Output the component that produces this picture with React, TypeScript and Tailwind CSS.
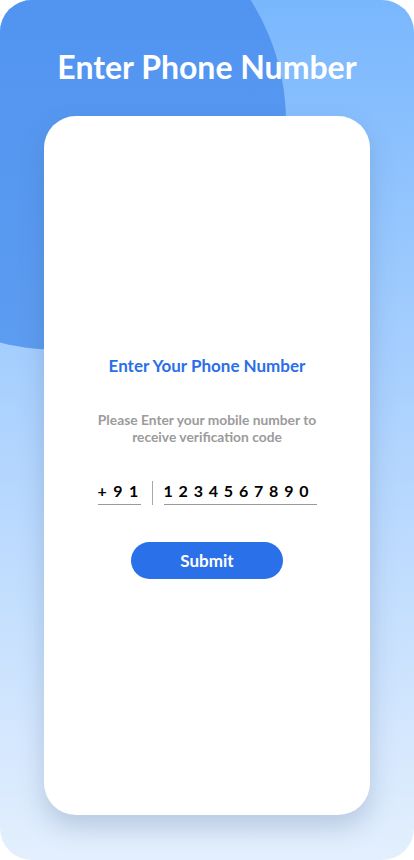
import React from 'react';

const App = () => {
	return (
		<div className="w-[414px] h-[860px] bg-white font-['Lato','Liberation_Sans',sans-serif]">
			<div className="relative w-[414px] h-[860px] rounded-[32px] overflow-hidden bg-gradient-to-b from-[#79b7fd] to-[#e3effd]">
				{/* big decorative blob top-left */}
				<div className="absolute -left-[170px] -top-[106px] w-[456px] h-[456px] rounded-full bg-gradient-to-b from-[#4e92f0] to-[#5c9cf1]" />

				<div className="relative flex flex-col items-center">
					<h1 className="mt-[48px] h-[38px] text-[32px] leading-[38px] font-bold text-white">Enter Phone Number</h1>

					<div className="mt-[30px] w-[326px] h-[699px] rounded-[32px] bg-white shadow-[0_12px_24px_rgba(70,100,140,0.25)] flex flex-col items-center pt-[239px]">
						<h2 className="text-[17px] leading-[21px] font-bold text-[#2a6fe8]">Enter Your Phone Number</h2>
						<p className="mt-[35px] w-[250px] text-center text-[13.8px] leading-[17px] font-bold text-[#9b9b9b]">
							Please Enter your mobile number to receive verification code
						</p>

						<div className="mt-[36px] flex items-stretch h-[24px]">
							<div className="w-[43px] border-b border-[#9a9a9a] text-[16px] leading-[19px] font-bold text-black tracking-[6.5px]">+91</div>
							<div className="mx-[11px] w-px bg-[#a8a8a8]" />
							<div className="w-[153px] border-b border-[#9a9a9a] text-[16px] leading-[19px] font-bold text-black tracking-[5.8px]">1234567890</div>
						</div>

						<button className="mt-[37px] w-[152px] h-[37px] rounded-full bg-[#2a70e8] text-white text-[17px] font-bold">
							Submit
						</button>
					</div>
				</div>
			</div>
		</div>
	);
};

export default App;
